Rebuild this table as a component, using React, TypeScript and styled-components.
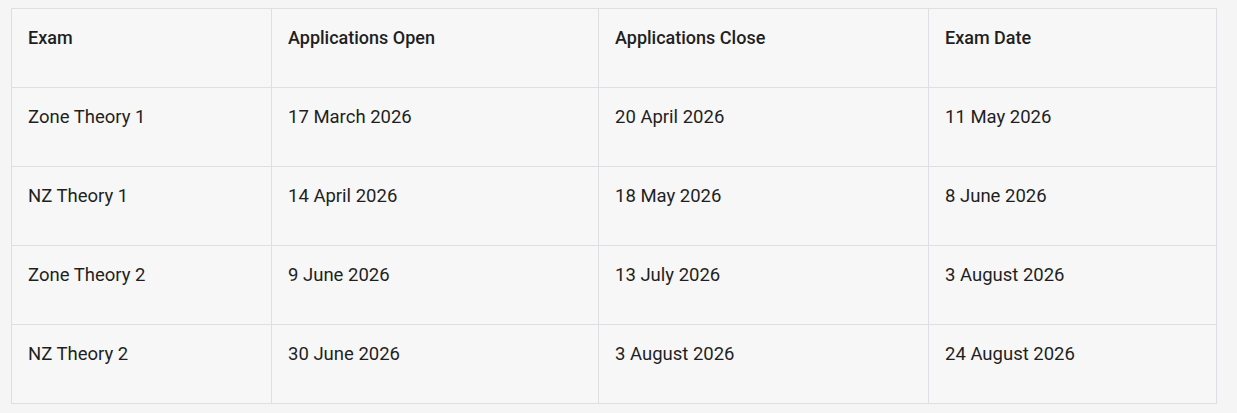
import React from 'react'
import styled, { createGlobalStyle } from 'styled-components'

const GlobalStyle = createGlobalStyle`
  body {
    margin: 0;
    background: #f5f5f5;
    font-family: 'Roboto', 'Liberation Sans', sans-serif;
    color: #1f1f1f;
  }
`

type Row = { exam: string; open: string; close: string; date: string }

const rows: Row[] = [
  { exam: 'Zone Theory 1', open: '17 March 2026', close: '20 April 2026', date: '11 May 2026' },
  { exam: 'NZ Theory 1', open: '14 April 2026', close: '18 May 2026', date: '8 June 2026' },
  { exam: 'Zone Theory 2', open: '9 June 2026', close: '13 July 2026', date: '3 August 2026' },
  { exam: 'NZ Theory 2', open: '30 June 2026', close: '3 August 2026', date: '24 August 2026' },
]

const columns = [260, 327, 330, 288]

export default function App() {
  return (
    <Page>
      <GlobalStyle />
      <Table>
        <colgroup>
          {columns.map((w, i) => (
            <col key={i} style={{ width: w }} />
          ))}
        </colgroup>
        <thead>
          <tr>
            <HeadCell>Exam</HeadCell>
            <HeadCell>Applications Open</HeadCell>
            <HeadCell>Applications Close</HeadCell>
            <HeadCell>Exam Date</HeadCell>
          </tr>
        </thead>
        <tbody>
          {rows.map(r => (
            <tr key={r.exam}>
              <Cell>{r.exam}</Cell>
              <Cell>{r.open}</Cell>
              <Cell>{r.close}</Cell>
              <Cell>{r.date}</Cell>
            </tr>
          ))}
        </tbody>
      </Table>
    </Page>
  )
}

const Page = styled.div`
  padding: 8px 0 0 11px;
  height: 413px;
  box-sizing: border-box;
`

const Table = styled.table`
  border-collapse: collapse;
  table-layout: fixed;
  width: 1206px;
  background: #f7f7f7;
`

const Cell = styled.td`
  border: 1px solid #dedfe2;
  padding: 17px 16px 0 16px;
  height: 79px;
  box-sizing: border-box;
  vertical-align: top;
  font-size: 18.5px;
  line-height: 24px;
  text-align: left;
`

const HeadCell = styled(Cell).attrs({ as: 'th' })`
  font-size: 18px;
  font-weight: 500;
`
